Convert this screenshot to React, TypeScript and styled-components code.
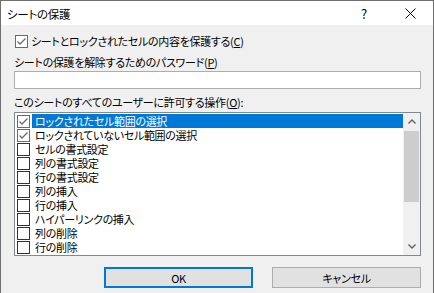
import { createGlobalStyle, styled } from "styled-components";

const GlobalStyle = createGlobalStyle`
  html, body {
    margin: 0;
    padding: 0;
    background: #f0f0f0;
    overflow: hidden;
  }
  body {
    font-family: "Noto Sans CJK JP", "Noto Sans", sans-serif;
    font-size: 11px;
    letter-spacing: -0.3px;
    font-feature-settings: "palt";
    color: #000;
  }
`;

const OPTIONS = [
  { label: "ロックされたセル範囲の選択", checked: true },
  { label: "ロックされていないセル範囲の選択", checked: true },
  { label: "セルの書式設定", checked: false },
  { label: "列の書式設定", checked: false },
  { label: "行の書式設定", checked: false },
  { label: "列の挿入", checked: false },
  { label: "行の挿入", checked: false },
  { label: "ハイパーリンクの挿入", checked: false },
  { label: "列の削除", checked: false },
  { label: "行の削除", checked: false },
];

const CheckBox = ({ checked }: { checked: boolean }) => (
  <Box $checked={checked}>
    {checked && (
      <svg width="11" height="11" viewBox="0 0 11 11">
        <polyline
          points="1.5,5.5 4,8 9.5,2.5"
          fill="none"
          stroke="#6a6a6a"
          strokeWidth="1.3"
        />
      </svg>
    )}
  </Box>
);

const Chevron = ({ up }: { up: boolean }) => (
  <svg width="8" height="5" viewBox="0 0 8 5">
    <polyline
      points={up ? "0.5,4.5 4,1 7.5,4.5" : "0.5,0.5 4,4 7.5,0.5"}
      fill="none"
      stroke="#606060"
      strokeWidth="1.4"
    />
  </svg>
);

const App = () => {
  return (
    <Window>
      <GlobalStyle />
      <TitleBar>
        <Title>シートの保護</Title>
        <CaptionButton>?</CaptionButton>
        <CaptionButton>
          <svg width="11" height="11" viewBox="0 0 11 11">
            <line x1="0.5" y1="0.5" x2="10.5" y2="10.5" stroke="#000" strokeWidth="1" />
            <line x1="10.5" y1="0.5" x2="0.5" y2="10.5" stroke="#000" strokeWidth="1" />
          </svg>
        </CaptionButton>
      </TitleBar>
      <Content>
        <CheckRow>
          <CheckBox checked />
          <span>
            シートとロックされたセルの内容を保護する(<u>C</u>)
          </span>
        </CheckRow>
        <Label $top={7}>
          シートの保護を解除するためのパスワード(<u>P</u>)
        </Label>
        <PasswordInput />
        <Label $top={6}>
          このシートのすべてのユーザーに許可する操作(<u>O</u>):
        </Label>
        <ListBox>
          <Items>
            {OPTIONS.map((opt, i) => (
              <Item key={opt.label}>
                <CheckBox checked={opt.checked} />
                <ItemText $selected={i === 0}>{opt.label}</ItemText>
              </Item>
            ))}
          </Items>
          <ScrollBar>
            <ArrowButton>
              <Chevron up />
            </ArrowButton>
            <Track>
              <Thumb />
            </Track>
            <ArrowButton>
              <Chevron up={false} />
            </ArrowButton>
          </ScrollBar>
        </ListBox>
        <ButtonRow>
          <Button $default>OK</Button>
          <Button>キャンセル</Button>
        </ButtonRow>
      </Content>
    </Window>
  );
};

const Window = styled.div`
  width: 434px;
  height: 293px;
  box-sizing: border-box;
  border: 1px solid #6e6e6e;
  border-bottom: none;
  display: flex;
  flex-direction: column;
  background: #f0f0f0;
`;

const TitleBar = styled.div`
  height: 24px;
  background: #fff;
  display: flex;
  align-items: center;
  padding-left: 6px;
`;

const Title = styled.div`
  flex: 1;
  font-size: 11.5px;
  line-height: 24px;
  padding-top: 1px;
`;

const CaptionButton = styled.div`
  width: 46px;
  height: 24px;
  display: flex;
  align-items: center;
  justify-content: center;
  font-size: 13px;
`;

const Content = styled.div`
  display: flex;
  flex-direction: column;
  padding: 0 12px 0 13px;
`;

const CheckRow = styled.div`
  display: flex;
  align-items: center;
  gap: 3px;
  margin-top: 9px;
  margin-left: 1px;
  height: 14px;
  line-height: 14px;
`;

const Box = styled.div<{ $checked: boolean }>`
  width: 13px;
  height: 13px;
  box-sizing: border-box;
  border: 1px solid ${(p) => (p.$checked ? "#6a6a6a" : "#333")};
  background: #fff;
  display: flex;
  align-items: center;
  justify-content: center;
  flex-shrink: 0;
`;

const Label = styled.div<{ $top: number }>`
  margin-top: ${(p) => p.$top}px;
  height: 14px;
  line-height: 14px;
  white-space: nowrap;
`;

const PasswordInput = styled.div`
  margin-top: 2px;
  height: 18px;
  box-sizing: border-box;
  border: 1px solid #adadad;
  background: #fff;
`;

const ListBox = styled.div`
  margin-top: 3px;
  height: 144px;
  box-sizing: border-box;
  border: 1px solid #828790;
  background: #fff;
  display: flex;
`;

const Items = styled.div`
  flex: 1;
  padding-top: 1px;
  display: flex;
  flex-direction: column;
`;

const Item = styled.div`
  height: 14px;
  display: flex;
  align-items: center;
  gap: 2px;
  padding-left: 2px;
`;

const ItemText = styled.div<{ $selected: boolean }>`
  flex: 1;
  height: 14px;
  line-height: 14px;
  padding-left: 3px;
  white-space: nowrap;
  background: ${(p) => (p.$selected ? "#0078d7" : "transparent")};
  color: ${(p) => (p.$selected ? "#fff" : "#000")};
`;

const ScrollBar = styled.div`
  width: 17px;
  display: flex;
  flex-direction: column;
  background: #f0f0f0;
`;

const ArrowButton = styled.div`
  height: 17px;
  display: flex;
  align-items: center;
  justify-content: center;
`;

const Track = styled.div`
  flex: 1;
`;

const Thumb = styled.div`
  margin: 1px 1px 0;
  height: 71px;
  background: #cdcdcd;
`;

const ButtonRow = styled.div`
  margin-top: 11px;
  display: flex;
  justify-content: flex-end;
  gap: 19px;
`;

const Button = styled.div<{ $default?: boolean }>`
  width: 149px;
  height: 21px;
  box-sizing: border-box;
  border: ${(p) => (p.$default ? "2px solid #0078d7" : "1px solid #adadad")};
  background: #e1e1e1;
  display: flex;
  align-items: center;
  justify-content: center;
`;

export default App;
